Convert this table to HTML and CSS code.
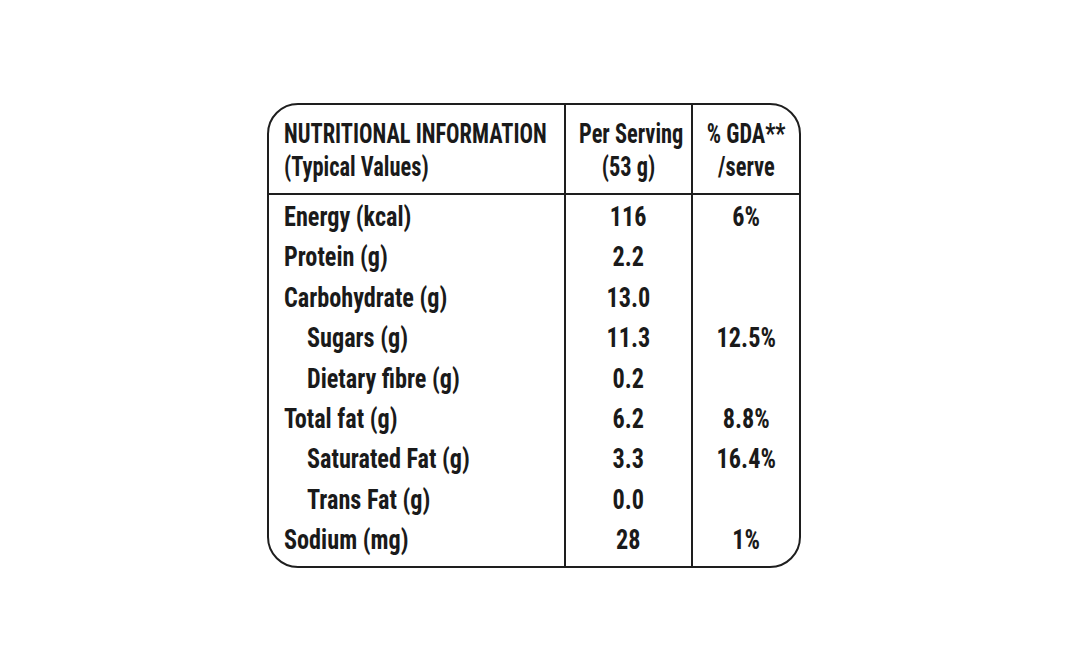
FILE: index.html
```html
<!DOCTYPE html>
<html lang="en">
<head>
<meta charset="utf-8">
<title>Nutritional Information</title>
<link rel="stylesheet" href="styles.css">
</head>
<body>
<div class="stage">
  <div class="panel">
    <div class="head">
      <div class="cell first"><span class="tx l">NUTRITIONAL INFORMATION</span><br><span class="tx l">(Typical Values)</span></div>
      <div class="cell mid"><span class="tx">Per Serving</span><br><span class="tx">(53 g)</span></div>
      <div class="cell last"><span class="tx">% GDA**</span><br><span class="tx">/serve</span></div>
    </div>
    <div class="body">
      <div class="cell first"><span class="tx l">Energy (kcal)</span></div>
      <div class="cell mid"><span class="tx">116</span></div>
      <div class="cell last"><span class="tx">6%</span></div>

      <div class="cell first"><span class="tx l">Protein (g)</span></div>
      <div class="cell mid"><span class="tx">2.2</span></div>
      <div class="cell last"></div>

      <div class="cell first"><span class="tx l">Carbohydrate (g)</span></div>
      <div class="cell mid"><span class="tx">13.0</span></div>
      <div class="cell last"></div>

      <div class="cell first sub"><span class="tx l">Sugars (g)</span></div>
      <div class="cell mid"><span class="tx">11.3</span></div>
      <div class="cell last"><span class="tx">12.5%</span></div>

      <div class="cell first sub"><span class="tx l">Dietary fibre (g)</span></div>
      <div class="cell mid"><span class="tx">0.2</span></div>
      <div class="cell last"></div>

      <div class="cell first"><span class="tx l">Total fat (g)</span></div>
      <div class="cell mid"><span class="tx">6.2</span></div>
      <div class="cell last"><span class="tx">8.8%</span></div>

      <div class="cell first sub"><span class="tx l">Saturated Fat (g)</span></div>
      <div class="cell mid"><span class="tx">3.3</span></div>
      <div class="cell last"><span class="tx">16.4%</span></div>

      <div class="cell first sub"><span class="tx l">Trans Fat (g)</span></div>
      <div class="cell mid"><span class="tx">0.0</span></div>
      <div class="cell last"></div>

      <div class="cell first"><span class="tx l">Sodium (mg)</span></div>
      <div class="cell mid"><span class="tx">28</span></div>
      <div class="cell last"><span class="tx">1%</span></div>
    </div>
  </div>
</div>
</body>
</html>
```
FILE: styles.css
```css
html, body {
  margin: 0;
  padding: 0;
  background: #ffffff;
}
.stage {
  width: 1068px;
  height: 671px;
  padding-top: 103px;
  padding-left: 267px;
  box-sizing: border-box;
}
.panel {
  width: 534px;
  box-sizing: border-box;
  border: 2px solid #1e1e1e;
  border-radius: 31px;
  overflow: hidden;
  color: #1a1a1a;
  font-family: "Roboto Condensed", "Roboto", sans-serif;
  font-stretch: condensed;
  font-weight: bold;
  font-size: 28px;
}
.head, .body {
  display: grid;
  grid-template-columns: 295px 127px 108px;
}
.head {
  border-bottom: 2px solid #1e1e1e;
  height: 90px;
  box-sizing: border-box;
}
.head .cell {
  padding-top: 12px;
  line-height: 33px;
}
.body {
  grid-auto-rows: 40.4px;
  padding-top: 2px;
  padding-bottom: 5px;
}
.cell {
  line-height: 40.4px;
  white-space: nowrap;
  text-align: center;
}
.cell.first {
  text-align: left;
  padding-left: 15px;
}
.cell.first.sub {
  padding-left: 38px;
}
.cell.mid, .cell.last {
  border-left: 2px solid #1e1e1e;
}
.body .cell.mid, .body .cell.last {
  margin-top: -2px;
  margin-bottom: -5px;
  padding-top: 2px;
}
.tx {
  display: inline-block;
  transform: scaleX(0.865);
  transform-origin: center;
}
.head .tx {
  transform: scaleX(0.80);
}
.tx.l {
  transform-origin: left;
}
```
